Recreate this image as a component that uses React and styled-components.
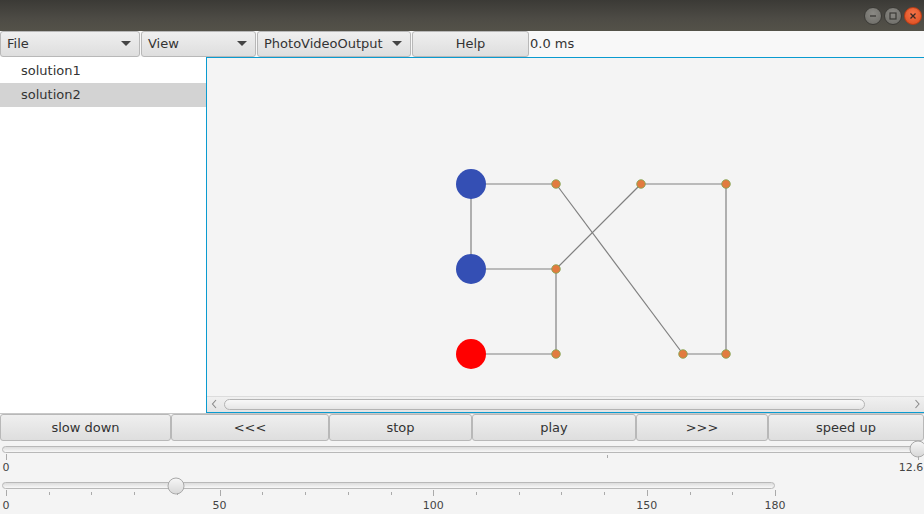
import React from "react";
import styled, { createGlobalStyle } from "styled-components";

const Global = createGlobalStyle`
  html, body {
    margin: 0;
    padding: 0;
    background: #f4f4f4;
    font-family: "DejaVu Sans", "Noto Sans", sans-serif;
    font-size: 13px;
    color: #333;
    overflow: hidden;
  }
`;

const Window = styled.div`
  width: 924px;
  height: 514px;
  display: flex;
  flex-direction: column;
  background: #f4f4f4;
`;

const TitleBar = styled.div`
  height: 31px;
  background: linear-gradient(#3b3a36, #4d4b45 60%, #545249);
  display: flex;
  align-items: center;
  justify-content: flex-end;
  gap: 2px;
  padding-right: 2px;
  box-sizing: border-box;
`;

const WinBtn = styled.div`
  width: 18px;
  height: 18px;
  box-sizing: border-box;
  border-radius: 50%;
  background: ${(p) => (p.close ? "radial-gradient(circle at 50% 35%, #f47449, #dc4a1c)" : "radial-gradient(circle at 50% 35%, #8a8984, #6b6a65)")};
  border: 1px solid ${(p) => (p.close ? "#b83d15" : "#3b3a36")};
  display: flex;
  align-items: center;
  justify-content: center;
  margin-top: 2px;
`;

const MenuBar = styled.div`
  height: 26px;
  display: flex;
  align-items: stretch;
  background: #f8f8f8;
`;

const MenuButton = styled.div`
  width: ${(p) => p.w}px;
  box-sizing: border-box;
  border: 1px solid #b8b8b8;
  border-radius: 3px;
  background: linear-gradient(#efefef, #dedede);
  display: flex;
  align-items: center;
  justify-content: ${(p) => (p.center ? "center" : "space-between")};
  padding: 0 ${(p) => (p.center ? 0 : 8)}px 0 ${(p) => (p.center ? 0 : 6)}px;
  margin-right: 1px;
`;

const Caret = styled.span`
  width: 0;
  height: 0;
  border-left: 5px solid transparent;
  border-right: 5px solid transparent;
  border-top: 5px solid #444;
`;

const Timing = styled.div`
  display: flex;
  align-items: center;
`;

const Main = styled.div`
  height: 357px;
  display: flex;
`;

const List = styled.div`
  width: 206px;
  background: #fff;
  padding-top: 2px;
`;

const ListItem = styled.div`
  height: 24px;
  line-height: 23px;
  padding-left: 21px;
  background: ${(p) => (p.selected ? "#d3d3d3" : "transparent")};
`;

const Canvas = styled.div`
  flex: 1;
  border: 1.5px solid #0a9bd0;
  border-right: none;
  display: flex;
  flex-direction: column;
  background: #f4f4f4;
`;

const Drawing = styled.svg`
  display: block;
  width: 716.5px;
  height: 338px;
`;

const HScroll = styled.div`
  height: 15px;
  background: linear-gradient(#f0f0f0, #e4e4e4);
  border-top: 1px solid #dcdcdc;
  display: flex;
  align-items: center;
  padding: 0 3px 0 4px;
  gap: 6px;
`;

const Thumb = styled.div`
  width: 641px;
  height: 11px;
  box-sizing: border-box;
  border: 1px solid #b4b4b4;
  border-radius: 6px;
  background: linear-gradient(#f8f8f8, #e6e6e6);
`;

const ScrollGap = styled.div`
  flex: 1;
`;

const Controls = styled.div`
  height: 27px;
  display: flex;
  border-top: 1px solid #c8c8c8;
`;

const CtrlButton = styled.div`
  width: ${(p) => p.w}px;
  box-sizing: border-box;
  border: 1px solid #b8b8b8;
  border-radius: 3px;
  background: linear-gradient(#efefef, #dedede);
  display: flex;
  align-items: center;
  justify-content: center;
`;

const SliderWrap = styled.div`
  position: relative;
  width: ${(p) => p.w}px;
  height: ${(p) => p.h}px;
`;

const Track = styled.div`
  position: absolute;
  left: 2px;
  right: 0;
  top: ${(p) => p.top}px;
  height: 7px;
  box-sizing: border-box;
  border: 1px solid #b8b8b8;
  border-radius: 4px;
  background: linear-gradient(#dcdcdc, #f8f8f8);
`;

const Knob = styled.div`
  position: absolute;
  width: 17px;
  height: 17px;
  box-sizing: border-box;
  border-radius: 50%;
  border: 1px solid #a8a8a8;
  background: linear-gradient(#f6f6f6, #d8d8d8);
  transform: translate(-50%, -50%);
`;

const Tick = styled.div`
  position: absolute;
  width: 1px;
  background: #aaa;
  height: ${(p) => (p.major ? 6 : 3)}px;
`;

const TickLabel = styled.div`
  position: absolute;
  font-size: 11px;
  color: #444;
  transform: translateX(-50%);
  white-space: nowrap;
`;

const speeds = [
  { label: "slow down", w: 171 },
  { label: "<<<", w: 158 },
  { label: "stop", w: 143 },
  { label: "play", w: 164 },
  { label: ">>>", w: 132 },
  { label: "speed up", w: 156 },
];

const bigNodes = [
  { x: 471, y: 184, c: "#344fb4" },
  { x: 471, y: 269, c: "#344fb4" },
  { x: 471, y: 354, c: "#ff0000" },
];

const smallNodes = [
  [556, 184],
  [556, 269],
  [556, 354],
  [641, 184],
  [726, 184],
  [683, 354],
  [726, 354],
];

const edges = [
  [471, 184, 556, 184],
  [471, 184, 471, 269],
  [471, 269, 556, 269],
  [471, 354, 556, 354],
  [556, 184, 683, 354],
  [556, 269, 641, 184],
  [556, 269, 556, 354],
  [641, 184, 726, 184],
  [726, 184, 726, 354],
  [683, 354, 726, 354],
];

function Chevron({ dir }) {
  const d = dir === "left" ? "M5 1 L1.5 5 L5 9" : "M1.5 1 L5 5 L1.5 9";
  return (
    <svg width="7" height="10" viewBox="0 0 7 10">
      <path d={d} fill="none" stroke="#8a8a8a" strokeWidth="1.1" />
    </svg>
  );
}

function Graph() {
  return (
    <Drawing viewBox="207 58 716.5 338">
      {edges.map(([x1, y1, x2, y2], i) => (
        <line key={i} x1={x1} y1={y1} x2={x2} y2={y2} stroke="#808080" strokeWidth="1.2" />
      ))}
      {bigNodes.map((n, i) => (
        <circle key={i} cx={n.x} cy={n.y} r="15" fill={n.c} />
      ))}
      {smallNodes.map(([x, y], i) => (
        <circle key={i} cx={x} cy={y} r="4.3" fill="#e27b3f" stroke="#7fa44f" strokeWidth="0.8" />
      ))}
    </Drawing>
  );
}

export default function App() {
  const slider2Ticks = [];
  for (let v = 0; v <= 180; v += 10) {
    slider2Ticks.push(v);
  }
  const pos2 = (v) => 6 + (v / 180) * 769;
  const isMajor = (v) => v % 50 === 0 || v === 180;

  return (
    <Window>
      <Global />
      <TitleBar>
        <WinBtn>
          <svg width="8" height="8" viewBox="0 0 8 8">
            <line x1="1" y1="4" x2="7" y2="4" stroke="#3a3935" strokeWidth="1.3" />
          </svg>
        </WinBtn>
        <WinBtn>
          <svg width="8" height="8" viewBox="0 0 8 8">
            <rect x="1" y="1" width="6" height="6" fill="none" stroke="#3a3935" strokeWidth="1.2" />
          </svg>
        </WinBtn>
        <WinBtn close>
          <svg width="8" height="8" viewBox="0 0 8 8">
            <path d="M1.5 1.5 L6.5 6.5 M6.5 1.5 L1.5 6.5" stroke="#3a2a25" strokeWidth="1.3" />
          </svg>
        </WinBtn>
      </TitleBar>

      <MenuBar>
        <MenuButton w={140}>
          File <Caret />
        </MenuButton>
        <MenuButton w={115}>
          View <Caret />
        </MenuButton>
        <MenuButton w={154}>
          PhotoVideoOutput <Caret />
        </MenuButton>
        <MenuButton w={117} center>
          Help
        </MenuButton>
        <Timing>0.0 ms</Timing>
      </MenuBar>

      <Main>
        <List>
          <ListItem>solution1</ListItem>
          <ListItem selected>solution2</ListItem>
        </List>
        <Canvas>
          <Graph />
          <HScroll>
            <Chevron dir="left" />
            <Thumb />
            <ScrollGap />
            <Chevron dir="right" />
          </HScroll>
        </Canvas>
      </Main>

      <Controls>
        {speeds.map((s) => (
          <CtrlButton key={s.label} w={s.w}>
            {s.label}
          </CtrlButton>
        ))}
      </Controls>

      <SliderWrap w={924} h={35}>
        <Track top={5} />
        <Tick major style={{ left: 6, top: 13 }} />
        <Tick style={{ left: 607, top: 14 }} />
        <Tick major style={{ left: 918, top: 13 }} />
        <TickLabel style={{ left: 6, top: 20 }}>0</TickLabel>
        <TickLabel style={{ left: 911, top: 20 }}>12.6</TickLabel>
        <Knob style={{ left: 918, top: 8 }} />
      </SliderWrap>

      <SliderWrap w={924} h={38}>
        <Track top={6} style={{ right: 149 }} />
        {slider2Ticks.map((v) => (
          <Tick key={v} major={isMajor(v)} style={{ left: pos2(v), top: isMajor(v) ? 14 : 16 }} />
        ))}
        {[0, 50, 100, 150, 180].map((v) => (
          <TickLabel key={v} style={{ left: pos2(v), top: 23 }}>
            {v}
          </TickLabel>
        ))}
        <Knob style={{ left: 176, top: 9.5 }} />
      </SliderWrap>
    </Window>
  );
}
